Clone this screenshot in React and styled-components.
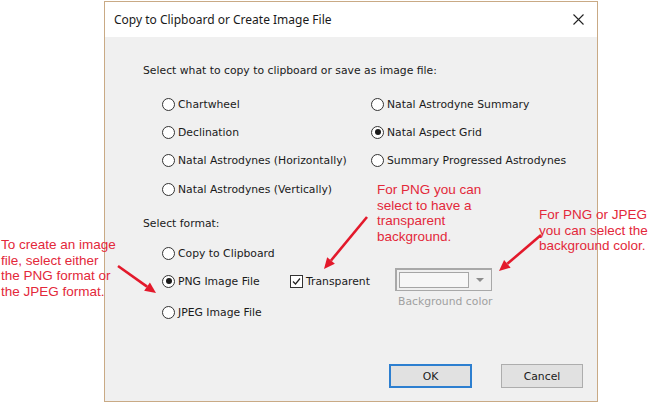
import React from "react";
import styled, { createGlobalStyle } from "styled-components";

const Global = createGlobalStyle`
  html, body { margin: 0; padding: 0; background: #ffffff; }
  #root { width: 657px; height: 403px; }
`;

const Page = styled.div`
  position: relative;
  width: 657px;
  height: 403px;
  background: #ffffff;
  padding: 1px 0 0 104px;
  box-sizing: border-box;
  overflow: hidden;
`;

const Dialog = styled.div`
  width: 494px;
  height: 401px;
  box-sizing: border-box;
  border: 1px solid #c9aa85;
  background: #f0f0f0;
  display: flex;
  flex-direction: column;
`;

const TitleBar = styled.div`
  height: 35px;
  background: #ffffff;
  display: flex;
  align-items: center;
  justify-content: space-between;
  padding: 0 12px 0 9px;
  font-family: "Noto Sans", "Open Sans", sans-serif;
  font-size: 12px;
  color: #1a1a1a;
`;

const CloseIcon = styled.svg`
  width: 11px;
  height: 11px;
  margin-right: 1px;
`;

const Body = styled.div`
  flex: 1;
  padding: 27px 0 0 38px;
  font-family: "DejaVu Sans", sans-serif;
  font-size: 10.8px;
  color: #1a1a1a;
  display: flex;
  flex-direction: column;
`;

const Heading = styled.div`
  height: 14px;
  line-height: 14px;
`;

const OptionGrid = styled.div`
  display: grid;
  grid-template-columns: 209px auto;
  grid-auto-rows: 28.3px;
  margin: 12px 0 0 19px;
  align-items: center;
`;

const Option = styled.label`
  display: flex;
  align-items: center;
  gap: 3px;
  white-space: nowrap;
  grid-column: ${(p) => p.col || "auto"};
  grid-row: ${(p) => p.row || "auto"};
`;

const RadioCircle = styled.span`
  width: 11px;
  height: 11px;
  border: 1px solid #333333;
  border-radius: 50%;
  background: #ffffff;
  display: flex;
  align-items: center;
  justify-content: center;
  flex-shrink: 0;
  &::after {
    content: "";
    width: 6px;
    height: 6px;
    border-radius: 50%;
    background: #1a1a1a;
    display: ${(p) => (p.checked ? "block" : "none")};
  }
`;

const SubHeading = styled.div`
  margin-top: 14px;
  height: 14px;
  line-height: 14px;
`;

const FormatGrid = styled.div`
  display: grid;
  grid-template-columns: 128px 105px auto;
  grid-template-rows: 28px 28px 34px;
  margin: 8px 0 0 19px;
  align-items: center;
`;

const CheckBox = styled.span`
  width: 11px;
  height: 11px;
  border: 1px solid #333333;
  background: #ffffff;
  display: flex;
  align-items: center;
  justify-content: center;
  flex-shrink: 0;
`;

const ColorBlock = styled.div`
  grid-column: 3;
  grid-row: 2;
  align-self: start;
  margin-top: 1px;
  display: flex;
  flex-direction: column;
  align-items: flex-start;
`;

const ColorCombo = styled.div`
  width: 97px;
  height: 23px;
  box-sizing: border-box;
  border: 2px solid #a8a8a8;
  border-right-width: 1px;
  border-bottom-width: 1px;
  background: #f0f0f0;
  display: flex;
  align-items: center;
  padding-left: 2px;
`;

const Swatch = styled.span`
  width: 70px;
  height: 16px;
  box-sizing: border-box;
  border: 1px solid #a6a6a6;
  background: #f7f7f7;
`;

const DropArrow = styled.span`
  flex: 1;
  display: flex;
  justify-content: center;
  align-items: center;
  &::after {
    content: "";
    border-left: 4px solid transparent;
    border-right: 4px solid transparent;
    border-top: 4px solid #8c8c8c;
  }
`;

const Caption = styled.div`
  color: #a0a0a0;
  margin: 4px 0 0 3px;
  white-space: nowrap;
`;

const Footer = styled.div`
  display: flex;
  justify-content: flex-end;
  gap: 29px;
  padding: 0 14px 13px 0;
`;

const Button = styled.button`
  width: ${(p) => (p.primary ? "83px" : "82px")};
  height: 24px;
  box-sizing: border-box;
  background: #e1e1e1;
  border: ${(p) => (p.primary ? "2px solid #2d7fd0" : "1px solid #adadad")};
  font-family: "DejaVu Sans", sans-serif;
  font-size: 10.8px;
  color: #1a1a1a;
  padding: 0;
`;

const Note = styled.div`
  position: absolute;
  left: ${(p) => p.x}px;
  top: ${(p) => p.y}px;
  font-family: "Liberation Sans", Arial, sans-serif;
  font-size: 13.5px;
  line-height: 15.5px;
  color: #e3283a;
  white-space: nowrap;
`;

const Arrows = styled.svg`
  position: absolute;
  left: 0;
  top: 0;
  width: 657px;
  height: 403px;
  pointer-events: none;
`;

function Radio({ checked, children, col, row }) {
  return (
    <Option col={col} row={row}>
      <RadioCircle checked={checked} />
      {children}
    </Option>
  );
}

function Arrow({ x1, y1, x2, y2 }) {
  const dx = x2 - x1;
  const dy = y2 - y1;
  const len = Math.hypot(dx, dy);
  const ux = dx / len;
  const uy = dy / len;
  const hl = 11;
  const hw = 5;
  const bx = x2 - ux * hl;
  const by = y2 - uy * hl;
  const p1 = `${bx - uy * hw},${by + ux * hw}`;
  const p2 = `${bx + uy * hw},${by - ux * hw}`;
  return (
    <g>
      <line x1={x1} y1={y1} x2={bx} y2={by} stroke="#e3192b" strokeWidth="2.6" />
      <polygon points={`${x2},${y2} ${p1} ${p2}`} fill="#e3192b" />
    </g>
  );
}

export default function App() {
  return (
    <>
      <Global />
      <Page>
        <Dialog>
          <TitleBar>
            <span>Copy to Clipboard or Create Image File</span>
            <CloseIcon viewBox="0 0 11 11">
              <path d="M0.5 0.5 L10.5 10.5 M10.5 0.5 L0.5 10.5" stroke="#222" strokeWidth="1.1" />
            </CloseIcon>
          </TitleBar>
          <Body>
            <Heading>Select what to copy to clipboard or save as image file:</Heading>
            <OptionGrid>
              <Radio col={1} row={1}>Chartwheel</Radio>
              <Radio col={1} row={2}>Declination</Radio>
              <Radio col={1} row={3}>Natal Astrodynes (Horizontally)</Radio>
              <Radio col={1} row={4}>Natal Astrodynes (Vertically)</Radio>
              <Radio col={2} row={1}>Natal Astrodyne Summary</Radio>
              <Radio col={2} row={2} checked>Natal Aspect Grid</Radio>
              <Radio col={2} row={3}>Summary Progressed Astrodynes</Radio>
            </OptionGrid>
            <SubHeading>Select format:</SubHeading>
            <FormatGrid>
              <Radio col={1} row={1}>Copy to Clipboard</Radio>
              <Radio col={1} row={2} checked>PNG Image File</Radio>
              <Radio col={1} row={3}>JPEG Image File</Radio>
              <Option col={2} row={2}>
                <CheckBox>
                  <svg width="9" height="9" viewBox="0 0 9 9">
                    <path d="M1 4.5 L3.5 7 L8 1.5" fill="none" stroke="#222" strokeWidth="1.2" />
                  </svg>
                </CheckBox>
                Transparent
              </Option>
              <ColorBlock>
                <ColorCombo>
                  <Swatch />
                  <DropArrow />
                </ColorCombo>
                <Caption>Background color</Caption>
              </ColorBlock>
            </FormatGrid>
          </Body>
          <Footer>
            <Button primary>OK</Button>
            <Button>Cancel</Button>
          </Footer>
        </Dialog>
        <Note x={377} y={182}>
          For PNG you can
          <br />
          select to have a
          <br />
          transparent
          <br />
          background.
        </Note>
        <Note x={539} y={207}>
          For PNG or JPEG
          <br />
          you can select the
          <br />
          background color.
        </Note>
        <Note x={1} y={237}>
          To create an image
          <br />
          file, select either
          <br />
          the PNG format or
          <br />
          the JPEG format.
        </Note>
        <Arrows viewBox="0 0 657 403">
          <Arrow x1={118} y1={266} x2={156} y2={293} />
          <Arrow x1={367} y1={217} x2={324} y2={269} />
          <Arrow x1={541} y1={235} x2={499} y2={271} />
        </Arrows>
      </Page>
    </>
  );
}
